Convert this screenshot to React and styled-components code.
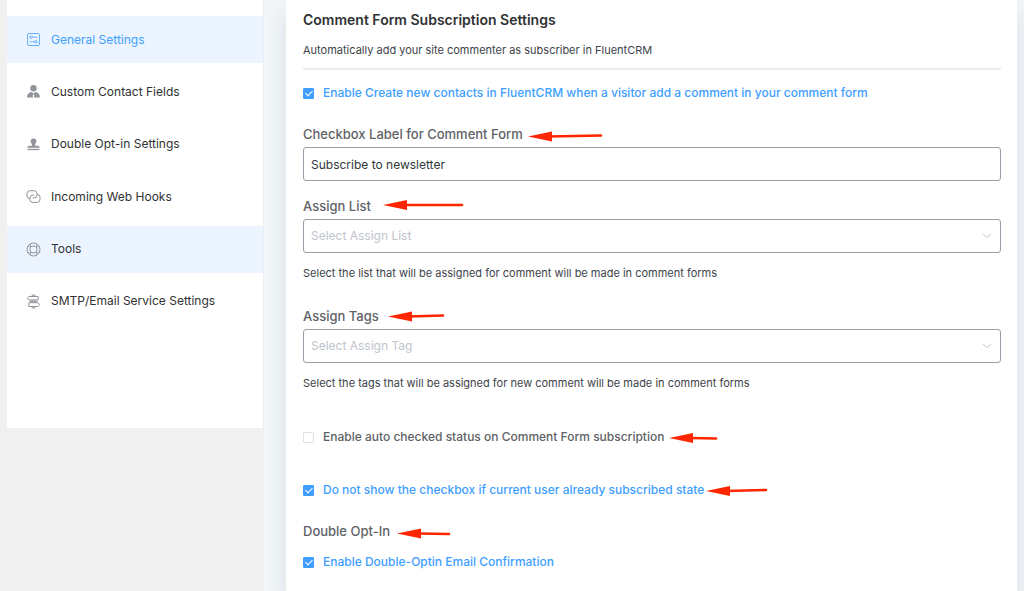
import React from "react";
import styled, { createGlobalStyle, css } from "styled-components";

const GlobalStyle = createGlobalStyle`
  *, *::before, *::after { box-sizing: border-box; }
  body {
    margin: 0;
    background: #f0f0f0;
    color: #3c434a;
    font-family: Inter, "Liberation Sans", sans-serif;
    font-size: 12px;
    line-height: 20px;
  }
`;

const Page = styled.div`
  display: flex;
  align-items: flex-start;
  min-height: 100vh;
  padding-left: 7px;
`;

const Sidebar = styled.nav`
  flex: 0 0 256px;
  padding: 16px 0 103px;
  background: #fff;
`;

const Menu = styled.ul`
  display: flex;
  flex-direction: column;
  justify-content: space-between;
  height: 309px;
  margin: 0;
  padding: 0;
  list-style: none;
`;

const MenuLink = styled.a`
  display: flex;
  align-items: center;
  gap: 10px;
  height: 47px;
  padding-left: 19px;
  color: #303133;
  text-decoration: none;
  background: ${(p) => (p.$highlight ? "#ecf5ff" : "transparent")};
  svg {
    flex: none;
    color: #909399;
  }
  ${(p) =>
    p.$active &&
    css`
      color: #409eff;
      svg { color: #66b1ff; }
    `}
`;

const Panel = styled.main`
  flex: 1;
  min-width: 0;
  align-self: stretch;
  display: flex;
  padding: 0 7px 0 22px;
  border-left: 1px solid #e9eef1;
  background: #f3f7fa;
  overflow: hidden;
`;

const Card = styled.section`
  position: relative;
  flex: 1;
  min-width: 0;
  padding: 10px 16px 19px 17px;
  background: #fff;
  box-shadow: 0 12px 24px 2px rgba(100, 130, 150, 0.18);
`;

const Title = styled.h1`
  margin: 0 0 10px;
  color: #303133;
  font-size: 14px;
  font-weight: 600;
  line-height: 20px;
`;

const Description = styled.p`
  margin: 0 0 8px;
  font-size: 11px;
`;

const Divider = styled.hr`
  height: 2px;
  margin: 0 0 13px;
  border: 0;
  background: #ebebeb;
`;

const Form = styled.form`
  display: flex;
  flex-direction: column;
`;

const Field = styled.div`
  display: flex;
  flex-direction: column;
  margin-bottom: ${(p) => p.$space}px;
`;

const Label = styled.label`
  margin-bottom: 3px;
  color: #606266;
  font-size: 13px;
  font-weight: 500;
`;

const GroupTitle = styled.h2`
  margin: 0 0 11px;
  color: #606266;
  font-size: 13px;
  font-weight: 500;
  line-height: 20px;
`;

const control = css`
  width: 100%;
  height: 34px;
  padding: 0 7px;
  border: 1px solid #98a0ab;
  border-radius: 3px;
  background: #fff;
  font: inherit;
  outline: none;
`;

const TextInput = styled.input`
  ${control}
  color: #32373c;
`;

const SelectWrap = styled.div`
  position: relative;
  display: flex;
  svg {
    position: absolute;
    right: 9px;
    top: 50%;
    transform: translateY(-50%);
    pointer-events: none;
  }
`;

const Select = styled.select`
  ${control}
  appearance: none;
  color: #c0c4cc;
`;

const Help = styled.p`
  margin: 10px 0 0;
  font-size: 11px;
`;

const CheckLabel = styled.label`
  display: flex;
  align-items: center;
  gap: 9px;
  margin-bottom: ${(p) => p.$space || 0}px;
  color: #606266;
  font-weight: 500;
  &:has(input:checked) { color: #409eff; }
`;

const Checkbox = styled.input`
  appearance: none;
  flex: none;
  display: grid;
  place-items: center;
  width: 11px;
  height: 11px;
  margin: 0;
  border: 1px solid #dcdfe6;
  border-radius: 1px;
  background: #fff;
  &:checked {
    border-color: #409eff;
    background: #409eff;
  }
  &:checked::after {
    content: "";
    width: 4px;
    height: 7px;
    border: solid #fff;
    border-width: 0 1px 1px 0;
    transform: translateY(-1px) rotate(45deg);
  }
`;

const Annotations = styled.svg`
  position: absolute;
  left: 0;
  top: 0;
  overflow: visible;
  pointer-events: none;
`;

const Icon = ({ children }) => (
  <svg width="15" height="15" viewBox="0 0 15 15" fill="none" stroke="currentColor" aria-hidden="true">
    {children}
  </svg>
);

const SettingsIcon = () => (
  <Icon>
    <rect x="1.5" y="1.5" width="12" height="12" rx="1.5" />
    <circle cx="5.2" cy="5.2" r="1.2" />
    <path d="M3.3 5.2H4M6.4 5.2h5M3.6 9.8h4.8" />
    <circle cx="9.8" cy="9.8" r="1.2" />
    <path d="M11 9.8h.8" />
  </Icon>
);

const UserIcon = () => (
  <Icon>
    <g fill="currentColor" stroke="none">
      <circle cx="7.5" cy="4.2" r="3.2" />
      <path d="M1 13.4C1.1 10.200 2.800 8.200 5.600 7.900L7.500 9.600 9.400 7.900C12.200 8.200 13.900 10.200 14 13.400H8L8.300 11.200 7.500 10.200 6.700 11.200 7 13.400Z" />
    </g>
  </Icon>
);

const StampIcon = () => (
  <Icon>
    <g fill="currentColor" stroke="none">
      <path d="M7.5 1.4a2.9 2.9 0 0 1 2.9 2.8c0 1.6-1.5 2.2-1.5 4.5h2.9c1.1 0 1.8.7 1.8 2H1.4c0-1.3.7-2 1.8-2h2.9c0-2.3-1.5-2.9-1.5-4.5a2.9 2.9 0 0 1 2.9-2.8Z" />
      <rect x="1.6" y="11.8" width="11.8" height="1.3" />
    </g>
  </Icon>
);

const LinkIcon = () => (
  <Icon>
    <path d="M4 9.600H3.700A2.700 2.700 0 0 1 1 6.900V4.400a2.700 2.700 0 0 1 2.700-2.700h4.600A2.700 2.700 0 0 1 11 4.400v1.800A2.700 2.700 0 0 1 8.300 8.900H6.600" />
    <path d="M11 5.500h.3A2.700 2.700 0 0 1 14 8.200v2.500a2.700 2.700 0 0 1-2.700 2.700H6.700A2.700 2.700 0 0 1 4 10.700V8.900A2.700 2.700 0 0 1 6.700 6.200H8.400" />
  </Icon>
);

const ToolsIcon = () => (
  <Icon>
    <circle cx="7.5" cy="7.5" r="6.5" />
    <rect x="4.200" y="4.200" width="6.600" height="6.600" rx="2" />
    <path d="M4.500 2v3M10.500 2v3M4.500 10v3M10.500 10v3M2 4.500h3M10 4.500h3M2 10.500h3M10 10.500h3" strokeWidth=".6" />
  </Icon>
);

const SignIcon = () => (
  <Icon>
    <path d="M6.200 2.400V1h2.600v1.400M6.200 12.600V14h2.600v-1.400M6 6v2.500M9 6v2.500" />
    <path d="M3 2.500h9.200v3.400H3L1.300 4.200Z" />
    <path d="M2.800 8.700H12l1.700 1.900L12 12.500H2.800Z" />
    <path d="M3.500 7.300h8" />
  </Icon>
);

const Chevron = () => (
  <svg width="10" height="6" viewBox="0 0 10 6" fill="none" stroke="#c0c4cc" aria-hidden="true">
    <path d="M1 .8 5 4.8 9 .8" />
  </svg>
);

const Arrow = ({ tip, tail }) => (
  <g>
    <path d={`M${tip[0]} ${tip[1]}l24-5v10z`} fill="#ff2600" />
    <path
      d={`M${tip[0] + 20} ${tip[1]}L${tail[0]} ${tail[1]}`}
      stroke="#ff2600"
      strokeWidth="2.6"
      strokeLinecap="round"
    />
  </g>
);

const arrows = [
  { tip: [242, 136.5], tail: [315, 135.5] },
  { tip: [97, 205], tail: [176, 205] },
  { tip: [102, 316.5], tail: [157, 315.5] },
  { tip: [383, 438], tail: [430, 438.5] },
  { tip: [420, 491], tail: [480, 490] },
  { tip: [111, 533.5], tail: [163, 534] },
];

const menu = [
  { text: "General Settings", icon: SettingsIcon, active: true, highlight: true },
  { text: "Custom Contact Fields", icon: UserIcon },
  { text: "Double Opt-in Settings", icon: StampIcon },
  { text: "Incoming Web Hooks", icon: LinkIcon },
  { text: "Tools", icon: ToolsIcon, highlight: true },
  { text: "SMTP/Email Service Settings", icon: SignIcon },
];

const CheckRow = ({ children, checked, space }) => (
  <CheckLabel $space={space}>
    <Checkbox type="checkbox" defaultChecked={checked} />
    {children}
  </CheckLabel>
);

const SelectField = ({ id, label, placeholder, help, space }) => (
  <Field $space={space}>
    <Label htmlFor={id}>{label}</Label>
    <SelectWrap>
      <Select id={id} defaultValue="">
        <option value="">{placeholder}</option>
      </Select>
      <Chevron />
    </SelectWrap>
    <Help>{help}</Help>
  </Field>
);

export default function App() {
  return (
    <>
      <GlobalStyle />
      <Page>
        <Sidebar>
          <Menu>
            {menu.map(({ text, icon: ItemIcon, active, highlight }) => (
              <li key={text}>
                <MenuLink href="#" $active={active} $highlight={highlight}>
                  <ItemIcon />
                  {text}
                </MenuLink>
              </li>
            ))}
          </Menu>
        </Sidebar>
        <Panel>
          <Card>
            <Title>Comment Form Subscription Settings</Title>
            <Description>Automatically add your site commenter as subscriber in FluentCRM</Description>
            <Divider />
            <Form>
              <CheckRow checked space={21}>
                Enable Create new contacts in FluentCRM when a visitor add a comment in your comment form
              </CheckRow>
              <Field $space={15}>
                <Label htmlFor="checkbox-label">Checkbox Label for Comment Form</Label>
                <TextInput id="checkbox-label" type="text" defaultValue="Subscribe to newsletter" />
              </Field>
              <SelectField
                id="assign-list"
                label="Assign List"
                placeholder="Select Assign List"
                help="Select the list that will be assigned for comment will be made in comment forms"
                space={23}
              />
              <SelectField
                id="assign-tags"
                label="Assign Tags"
                placeholder="Select Assign Tag"
                help="Select the tags that will be assigned for new comment will be made in comment forms"
                space={34}
              />
              <CheckRow space={33}>Enable auto checked status on Comment Form subscription</CheckRow>
              <CheckRow checked space={21}>
                Do not show the checkbox if current user already subscribed state
              </CheckRow>
              <GroupTitle>Double Opt-In</GroupTitle>
              <CheckRow checked>Enable Double-Optin Email Confirmation</CheckRow>
            </Form>
            <Annotations width="1" height="1" aria-hidden="true">
              {arrows.map((a) => (
                <Arrow key={a.tip.join()} {...a} />
              ))}
            </Annotations>
          </Card>
        </Panel>
      </Page>
    </>
  );
}
